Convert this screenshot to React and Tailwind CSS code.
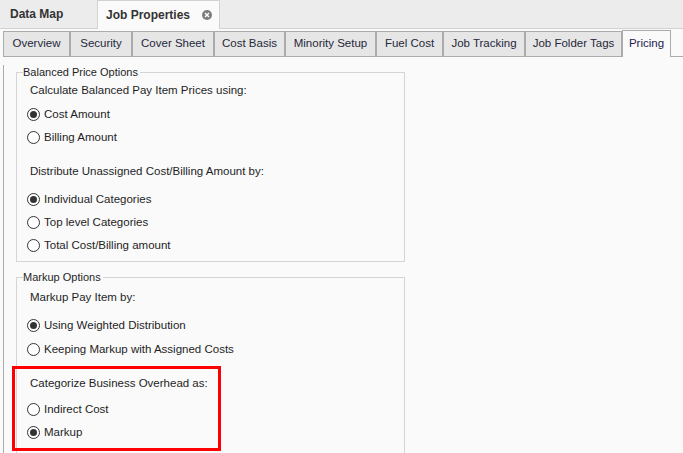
import React from 'react'

const font = { fontFamily: '"Liberation Sans", Arial, sans-serif' }

const tabs = [
  { label: 'Overview', w: 'w-[67px]' },
  { label: 'Security', w: 'w-[62px]' },
  { label: 'Cover Sheet', w: 'w-[82px]' },
  { label: 'Cost Basis', w: 'w-[71px]' },
  { label: 'Minority Setup', w: 'w-[91px]' },
  { label: 'Fuel Cost', w: 'w-[67px]' },
  { label: 'Job Tracking', w: 'w-[82px]' },
  { label: 'Job Folder Tags', w: 'w-[97px]' },
]

function Radio({ label, checked, className = '' }) {
  return (
    <div className={`flex h-[23px] items-center ${className}`}>
      <span className="flex h-[13px] w-[13px] items-center justify-center rounded-full border border-[#333] bg-white">
        {checked && <span className="h-[7px] w-[7px] rounded-full bg-[#333]" />}
      </span>
      <span className="ml-[4px] text-[11.5px] text-[#1e1e1e]">{label}</span>
    </div>
  )
}

function Heading({ children, className = '' }) {
  return (
    <div className={`flex h-[22px] items-center text-[11.5px] text-[#1e1e1e] ${className}`}>
      {children}
    </div>
  )
}

export default function App() {
  return (
    <div className="h-[453px] w-[683px] overflow-hidden bg-[#fafafa]" style={font}>
      {/* document tabs */}
      <div className="flex h-[29px] items-end border-b border-[#d2d2d2] bg-[#ececec]">
        <div className="flex h-[28px] w-[97px] items-center pl-[10px] text-[12px] font-bold text-[#333]">
          Data Map
        </div>
        <div className="-mb-px flex h-[29px] w-[123px] items-center border border-b-0 border-[#d2d2d2] bg-[#fafafa] pl-[8px] text-[12px] font-bold text-[#333]">
          Job Properties
          <span className="ml-[12px] flex h-[10px] w-[10px] items-center justify-center rounded-full bg-[#7c7c7c]">
            <svg width="6" height="6" viewBox="0 0 6 6">
              <path d="M1 1L5 5M5 1L1 5" stroke="#fff" strokeWidth="1.4" />
            </svg>
          </span>
        </div>
      </div>

      {/* page tabs */}
      <div className="mt-[1px] flex h-[27px] items-end pl-[3px]">
        {tabs.map((t) => (
          <div
            key={t.label}
            className={`flex h-[26px] ${t.w} items-center justify-center border border-[#ababab] bg-[#e6e6e6] text-[11.5px] text-[#25283a]`}
          >
            {t.label}
          </div>
        ))}
        <div className="flex h-[27px] w-[49px] items-center justify-center border border-b-0 border-[#ababab] bg-[#fafafa] text-[11.5px] text-[#1c2350]">
          Pricing
        </div>
        <div className="h-[27px] flex-1 border-b border-[#ababab]" />
      </div>

      {/* content */}
      <div className="ml-[3px] h-[400px] border-l border-[#ababab] pl-[12px]">
        <fieldset className="mt-[8px] w-[389px] border border-[#d5d5d5] pb-[4px]">
          <legend className="ml-[6px] pr-[2px] text-[11px] leading-[14px] text-[#1e1e1e]">
            Balanced Price Options
          </legend>
          <div className="pl-[10px]">
            <Heading className="mt-[1px] pl-[3px]">Calculate Balanced Pay Item Prices using:</Heading>
            <Radio className="mt-[1px]" label="Cost Amount" checked />
            <Radio label="Billing Amount" />
            <Heading className="mt-[12px] pl-[3px]">Distribute Unassigned Cost/Billing Amount by:</Heading>
            <Radio className="mt-[5px]" label="Individual Categories" checked />
            <Radio label="Top level Categories" />
            <Radio label="Total Cost/Billing amount" />
          </div>
        </fieldset>

        <fieldset className="mt-[8px] w-[389px] border border-[#d5d5d5] pb-[20px]">
          <legend className="ml-[6px] pr-[2px] text-[11px] leading-[14px] text-[#1e1e1e]">
            Markup Options
          </legend>
          <div className="pl-[10px]">
            <Heading className="mt-[3px] pl-[3px]">Markup Pay Item by:</Heading>
            <Radio className="mt-[5px]" label="Using Weighted Distribution" checked />
            <Radio className="mt-[1px]" label="Keeping Markup with Assigned Costs" />
          </div>
          <div className="-ml-[5px] mt-[5px] w-[209px] border-[3px] border-[#f00] pb-[4px] pl-[12px] pt-[4px]">
            <Heading className="pl-[3px]">Categorize Business Overhead as:</Heading>
            <Radio className="mt-[3px]" label="Indirect Cost" />
            <Radio label="Markup" checked />
          </div>
        </fieldset>
      </div>
    </div>
  )
}
